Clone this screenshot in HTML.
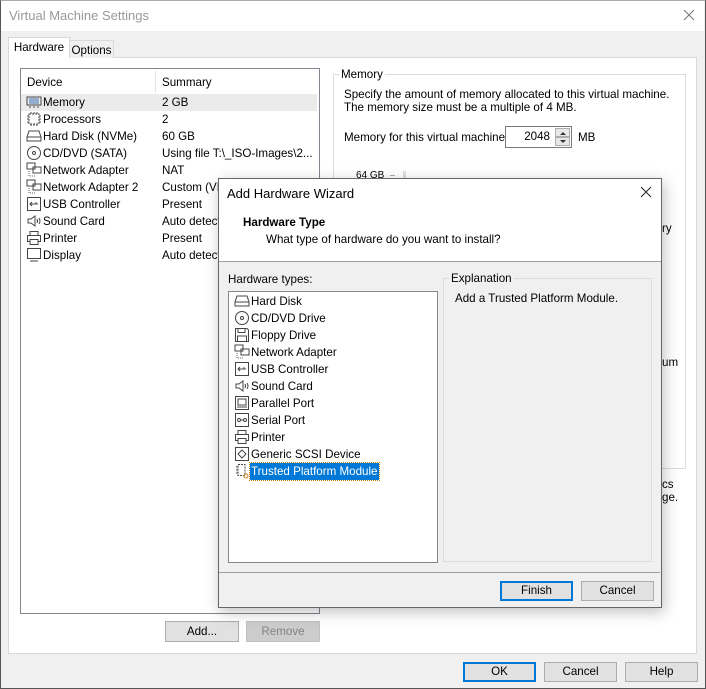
<!DOCTYPE html>
<html><head><meta charset="utf-8"><style>
*{box-sizing:border-box;margin:0;padding:0}
body{width:706px;height:689px;overflow:hidden;background:#f0f0f0;font-family:"Liberation Sans",sans-serif;font-size:11.6px;color:#000;position:relative}
.a{position:absolute}
.btn{position:absolute;background:#e1e1e1;border:1px solid #adadad;text-align:center;line-height:18px;font-size:11.6px}
.def{border:2px solid #0078d7;line-height:16px}
.row{position:absolute;height:17px;line-height:17px;white-space:nowrap}
svg.i{position:absolute;width:16px;height:16px}
</style></head><body>
<div class="a" style="left:0;top:0;width:706px;height:689px;border:1px solid #555;border-top-color:#aaa;"></div>
<div class="a" style="left:1px;top:1px;width:703px;height:30px;background:#fff"></div>
<div class="a" style="left:9px;top:8px;font-size:13px;color:#999">Virtual Machine Settings</div>
<svg class="a" style="left:683px;top:9px" width="12" height="12"><path d="M1 1L11 11M11 1L1 11" stroke="#777" stroke-width="1"/></svg>
<div class="a" style="left:8px;top:57px;width:689px;height:597px;background:#fff;border:1px solid #d9d9d9"></div>
<div class="a" style="left:69px;top:40px;width:45px;height:18px;background:#f0f0f0;border:1px solid #d9d9d9;border-bottom:none;text-align:center;line-height:19px">Options</div>
<div class="a" style="left:8px;top:37px;width:62px;height:21px;background:#fff;border:1px solid #d9d9d9;border-bottom:none;text-align:center;line-height:19px">Hardware</div>
<div class="a" style="left:20px;top:68px;width:300px;height:546px;background:#fff;border:1px solid #828790"></div>
<div class="a" style="left:155px;top:71px;width:1px;height:22px;background:#e5e5e5"></div>
<div class="row" style="left:27px;top:74px">Device</div>
<div class="row" style="left:162px;top:74px">Summary</div>
<div class="a" style="left:21px;top:94px;width:296px;height:17px;background:#ebebeb"></div>
<div id="dev"></div>
<div class="a" style="left:333px;top:74px;width:353px;height:395px;border:1px solid #dcdcdc"></div>
<div class="a" style="left:339px;top:68px;background:#fff;padding:0 2px">Memory</div>
<div class="a" style="left:344px;top:88px;line-height:13px;width:340px">Specify the amount of memory allocated to this virtual machine. The memory size must be a multiple of 4 MB.</div>
<div class="a" style="left:344px;top:131px">Memory for this virtual machine:</div>
<div class="a" style="left:505px;top:126px;width:67px;height:22px;border:1px solid #7a7a7a;background:#fff"></div>
<div class="a" style="left:520px;top:130px;width:30px;text-align:right">2048</div>
<div class="a" style="left:555px;top:128px;width:15px;height:9px;border:1px solid #adadad;background:#e8e8e8"></div>
<div class="a" style="left:555px;top:137px;width:15px;height:9px;border:1px solid #adadad;background:#e8e8e8"></div>
<svg class="a" style="left:558px;top:129px" width="10" height="17"><path d="M2 6L5 3L8 6ZM2 11L5 14L8 11Z" fill="#333"/></svg>
<div class="a" style="left:578px;top:131px">MB</div>
<div class="a" style="left:356px;top:170px;font-size:10px">64 GB</div>
<div class="a" style="left:390px;top:175px;width:5px;height:1px;background:#aaa"></div>
<div class="a" style="left:403px;top:171px;width:3px;height:8px;background:#ddd"></div>
<div class="a" style="left:662px;top:222px">ry</div>
<div class="a" style="left:662px;top:356px">um</div>
<div class="a" style="left:662px;top:478px">cs</div>
<div class="a" style="left:662px;top:491px">ge.</div>
<div class="btn" style="left:165px;top:621px;width:74px;height:21px;line-height:19px">Add...</div>
<div class="btn" style="left:246px;top:621px;width:74px;height:21px;line-height:19px;background:#cccccc;border-color:#bfbfbf;color:#838383">Remove</div>
<div class="btn def" style="left:463px;top:662px;width:73px;height:20px">OK</div>
<div class="btn" style="left:544px;top:662px;width:73px;height:20px">Cancel</div>
<div class="btn" style="left:625px;top:662px;width:73px;height:20px">Help</div>

<div class="a" style="left:218px;top:178px;width:444px;height:430px;background:#f0f0f0;border:1px solid #666;box-shadow:2px 4px 14px rgba(0,0,0,.25)"></div>
<div class="a" style="left:219px;top:179px;width:442px;height:82px;background:#fff"></div>
<div class="a" style="left:219px;top:261px;width:442px;height:1px;background:#a0a0a0"></div>
<div class="a" style="left:227px;top:186px;font-size:13px">Add Hardware Wizard</div>
<svg class="a" style="left:640px;top:186px" width="12" height="12"><path d="M1 1L11 11M11 1L1 11" stroke="#222" stroke-width="1"/></svg>
<div class="a" style="left:243px;top:216px;font-weight:bold">Hardware Type</div>
<div class="a" style="left:266px;top:233px">What type of hardware do you want to install?</div>
<div class="a" style="left:228px;top:273px">Hardware types:</div>
<div class="a" style="left:228px;top:291px;width:210px;height:272px;background:#fff;border:1px solid #828790"></div>
<div id="hw"></div>
<div class="a" style="left:443px;top:278px;width:209px;height:284px;border:1px solid #dcdcdc"></div>
<div class="a" style="left:449px;top:272px;background:#f0f0f0;padding:0 2px">Explanation</div>
<div class="a" style="left:455px;top:292px">Add a Trusted Platform Module.</div>
<div class="a" style="left:219px;top:572px;width:441px;height:1px;background:#a0a0a0"></div>
<div class="btn def" style="left:500px;top:581px;width:73px;height:20px">Finish</div>
<div class="btn" style="left:581px;top:581px;width:73px;height:20px">Cancel</div>

<script>
var I={
mem:'<rect x="1" y="3" width="14" height="8" fill="none" stroke="#444"/><path d="M3 5h10M3 7h10M3 9h10" stroke="#3a6fb0"/><path d="M4 12v2M8 12v2M12 12v2" stroke="#444"/>',
cpu:'<rect x="3" y="3" width="10" height="10" fill="none" stroke="#444" stroke-dasharray="2 1"/><path d="M1 5h2M1 8h2M1 11h2M13 5h2M13 8h2M13 11h2M5 1v2M8 1v2M11 1v2M5 13v2M8 13v2M11 13v2" stroke="#444"/>',
hdd:'<path d="M1 9L3 3H13L15 9V13H1Z" fill="none" stroke="#444"/><path d="M1 9H15" stroke="#444"/>',
cd:'<circle cx="8" cy="8" r="6.5" fill="none" stroke="#444"/><circle cx="8" cy="8" r="1.5" fill="none" stroke="#444"/>',
net:'<rect x="1" y="1" width="8" height="6" fill="none" stroke="#444"/><rect x="7" y="5" width="8" height="6" fill="none" stroke="#444"/><path d="M3 9v5h6" stroke="#666" stroke-dasharray="1 1" fill="none"/>',
usb:'<rect x="1.5" y="1.5" width="13" height="13" fill="none" stroke="#444"/><path d="M4 8h8M6 6l-2 2 2 2M10 6v2" stroke="#444" fill="none"/>',
snd:'<path d="M2 6h3l4-3v10l-4-3H2Z" fill="none" stroke="#444"/><path d="M11 6q1 2 0 4M13 5q2 3 0 6" stroke="#444" fill="none"/>',
prn:'<rect x="4" y="1.5" width="8" height="4" fill="none" stroke="#444"/><rect x="1.5" y="5.5" width="13" height="6" fill="none" stroke="#444"/><rect x="4" y="9.5" width="8" height="5" fill="#fff" stroke="#444"/>',
dsp:'<rect x="1.5" y="1.5" width="13" height="10" fill="none" stroke="#444"/><path d="M4 14h8" stroke="#444"/>',
flp:'<path d="M1.5 1.5H13L14.5 3V14.5H1.5Z" fill="none" stroke="#444"/><rect x="4" y="1.5" width="7" height="4" fill="none" stroke="#444"/><rect x="3.5" y="9" width="9" height="5.5" fill="none" stroke="#444"/>',
par:'<rect x="1.5" y="1.5" width="13" height="13" fill="none" stroke="#444"/><rect x="4" y="4" width="8" height="6" fill="none" stroke="#444"/><path d="M3 12h10" stroke="#444"/>',
ser:'<rect x="1.5" y="1.5" width="13" height="13" fill="none" stroke="#444"/><circle cx="5" cy="8" r="1.5" fill="none" stroke="#444"/><circle cx="11" cy="8" r="1.5" fill="none" stroke="#444"/><path d="M7 8h2" stroke="#444"/>',
scsi:'<rect x="1.5" y="1.5" width="13" height="13" fill="none" stroke="#444"/><path d="M8 4l4 4-4 4-4-4Z" fill="none" stroke="#444"/>',
tpm:'<path d="M4 1.5h7v11H4Z" fill="none" stroke="#444" stroke-dasharray="2 1"/><path d="M2 4h2M2 7h2M2 10h2" stroke="#444"/><circle cx="12" cy="13" r="2" fill="none" stroke="#d08020"/>'
};
function ic(k,x,y){return '<svg class="i" style="left:'+x+'px;top:'+y+'px" viewBox="0 0 16 16">'+I[k]+'</svg>';}
var d=[['mem','Memory','2 GB'],['cpu','Processors','2'],['hdd','Hard Disk (NVMe)','60 GB'],['cd','CD/DVD (SATA)','Using file T:\\_ISO-Images\\2...'],['net','Network Adapter','NAT'],['net','Network Adapter 2','Custom (VM'],['usb','USB Controller','Present'],['snd','Sound Card','Auto detect'],['prn','Printer','Present'],['dsp','Display','Auto detect']];
var h='';d.forEach(function(r,i){var y=94+i*17;h+=ic(r[0],26,y)+'<div class="row" style="left:43px;top:'+y+'px">'+r[1]+'</div><div class="row" style="left:162px;top:'+y+'px">'+r[2]+'</div>';});
document.getElementById('dev').outerHTML=h;
var w=[['hdd','Hard Disk'],['cd','CD/DVD Drive'],['flp','Floppy Drive'],['net','Network Adapter'],['usb','USB Controller'],['snd','Sound Card'],['par','Parallel Port'],['ser','Serial Port'],['prn','Printer'],['scsi','Generic SCSI Device'],['tpm','Trusted Platform Module']];
h='';w.forEach(function(r,i){var y=293+i*17;h+=ic(r[0],234,y);h+='<div class="row" style="left:250px;top:'+y+'px;padding:0 1px;'+(i==10?'color:#fff;background:#0078d7;outline:1px dotted #e08000':'')+'">'+r[1]+'</div>';});
document.getElementById('hw').outerHTML=h;
</script>
</body></html>
